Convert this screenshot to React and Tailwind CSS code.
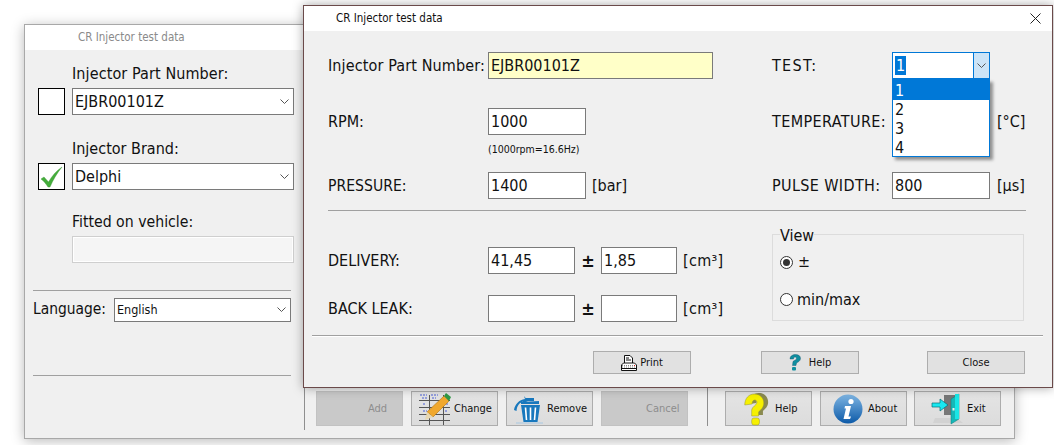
import React from "react";

const FONT = { fontFamily: '"DejaVu Sans Condensed","DejaVu Sans",sans-serif' };

function Chevron({ className = "" }) {
  return (
    <svg width="9" height="6" viewBox="0 0 9 6" className={className} fill="none" stroke="#555" strokeWidth="1">
      <path d="M0.5 0.5 L4.5 4.5 L8.5 0.5" />
    </svg>
  );
}

function Select({ value, w, h = "h-[27px]", text = "text-[16px]" }) {
  return (
    <div className={`${w} ${h} ${text} flex items-center justify-between border border-[#7a7a7a] bg-white pl-[2px] pr-[4px] text-[#111]`}>
      <span className="pt-px">{value}</span>
      <Chevron />
    </div>
  );
}

function Input({ value = "", w = "w-[98px]", bg = "bg-white" }) {
  return (
    <div className={`${w} ${bg} flex h-[27px] shrink-0 items-center border border-[#7a7a7a] pt-px pl-[2px] text-[16px] text-[#111]`}>
      {value}
    </div>
  );
}

function BackWindowButton({ label, icon, disabled, textPl }) {
  return (
    <div
      className={`relative flex h-[35px] w-[87px] items-center border pt-[2px] text-[11px] ${
        disabled
          ? "border-[#c2c2c2] bg-[#c9c9c9] text-[#8d8d8d]"
          : "border-[#adadad] bg-gradient-to-b from-[#e4e4e4] to-[#dcdcdc] text-[#111]"
      }`}
    >
      {icon}
      <span className={textPl}>{label}</span>
    </div>
  );
}

function DialogButton({ children }) {
  return (
    <div className="flex h-[23px] w-[98px] items-center justify-center gap-[3px] border border-[#adadad] bg-[#e1e1e1] text-[11px] text-[#111]">
      {children}
    </div>
  );
}

function PencilIcon() {
  return (
    <svg width="33" height="34" viewBox="0 0 33 34" className="mt-[-2px] ml-[6px] shrink-0">
      <g stroke="#555" strokeWidth="1" fill="none">
        <path d="M1 8.5H32M1 15.5H32M1 22.5H32M1 28.5H32M11.5 3V33M25.5 3V33" />
      </g>
      <path d="M2 3H9M13 3H20M4 6H10M14 6H18M5 12H8M28 12H31M5 19H9M27 19H30" stroke="#4a5fd8" strokeWidth="1" strokeDasharray="2 1" />
      <path d="M26 4 L31 9 L15 25 L9 20 Z" fill="#f0a82e" stroke="#b07310" strokeWidth="0.6" />
      <path d="M9 20 L15 25 L7 28 Z" fill="#e8d7b0" />
      <path d="M26 4 L28 1 L33 5 L31 9 Z" fill="#2f9a45" />
    </svg>
  );
}

function TrashIcon() {
  return (
    <svg width="32" height="32" viewBox="0 0 32 32" className="mt-[-2px] ml-[6px] shrink-0">
      <path d="M8 12H27L24.5 29H10.5Z" fill="#1878bd" />
      <path d="M12.5 14.5L13.5 27M17.5 14.5V27M22.5 14.5L21.5 27" stroke="#fff" strokeWidth="1.6" />
      <path d="M8 9L26 8V11H8Z" fill="#1878bd" />
      <path d="M13 5H21V8H13Z" fill="#1878bd" />
      <path d="M1 17C2 11 6 7 12 6L11 3L15 8L9 11L10 8.5C6 10 4 13 3.5 18Z" fill="#1878bd" />
      <path d="M3 30H30" stroke="#a8c8e2" strokeWidth="1" />
    </svg>
  );
}

function YellowQuestion() {
  return (
    <svg width="26" height="34" viewBox="0 0 30 34" preserveAspectRatio="none" className="mt-[-2px] ml-[17px] shrink-0">
      <path d="M4 12C4 5 9 1 15 1C22 1 26 5 26 10C26 15 22 17 20 19V23H12V17C12 14 18 12 18 9.5C18 8 17 7 15.5 7C13.5 7 12.5 9 12.5 11Z" fill="#8a8a50" transform="translate(3 0)" />
      <path d="M2 13C2 6 7 2 13 2C20 2 24 6 24 11C24 16 20 18 18 20V24H10V18C10 15 16 13 16 10.5C16 9 15 8 13.5 8C11.5 8 10.5 10 10.5 12Z" fill="#f6f000" stroke="#8f8f30" strokeWidth="0.5" />
      <rect x="10" y="26" width="9" height="7" rx="2.5" fill="#f6f000" stroke="#8f8f30" strokeWidth="0.5" />
    </svg>
  );
}

function InfoIcon() {
  return (
    <svg width="30" height="30" viewBox="0 0 30 30" className="mt-[-2px] ml-[12px] shrink-0">
      <defs>
        <linearGradient id="infoG" x1="0" y1="0" x2="0" y2="1">
          <stop offset="0" stopColor="#7db4e2" />
          <stop offset="1" stopColor="#0d5aa8" />
        </linearGradient>
      </defs>
      <circle cx="15" cy="15" r="14.5" fill="url(#infoG)" />
      <circle cx="18" cy="7.5" r="2.6" fill="#fff" />
      <path d="M12 12H18L15.5 22.5H18L17 25H10.5L13 14.5H11.5Z" fill="#fff" />
    </svg>
  );
}

function DoorIcon() {
  return (
    <svg width="34" height="32" viewBox="0 0 34 32" className="mt-[-2px] ml-[16px] shrink-0">
      <path d="M4 25H26L32 30H2Z" fill="#d2d2d2" />
      <rect x="13" y="2" width="12" height="20" fill="#777" />
      <path d="M20 6L28 1V26L20 31Z" fill="#16b8b8" stroke="#0a7f7f" strokeWidth="0.5" />
      <path d="M24 1H28V26H24Z" fill="#19e6e6" />
      <rect x="21.5" y="15" width="2" height="2.5" fill="#eee" />
      <path d="M1 10H9V6L17 12L9 18V14H1Z" fill="#18e8f0" stroke="#0a6f77" strokeWidth="0.7" />
    </svg>
  );
}

function PrinterIcon() {
  return (
    <svg width="16" height="16" viewBox="0 0 16 16" fill="none" stroke="#111" strokeWidth="1">
      <path d="M3.5 8V0.5H9L11.5 3V8" fill="#fff" />
      <path d="M5 3H8M5 5H10" />
      <path d="M0.5 10L2.5 8H13.5L15.5 10V15.5H0.5Z" fill="#fff" />
      <path d="M1 10.5H15M1 12H15" stroke="#888" strokeDasharray="1 1" />
      <path d="M1 13.5H15" stroke="#111" />
      <path d="M13 10.5H14" stroke="#d22" />
    </svg>
  );
}

function TealQuestion() {
  return (
    <svg width="12" height="17" viewBox="0 0 12 17">
      <path d="M1 5C1 2 3.5 0.5 6.5 0.5C9.5 0.5 11.5 2 11.5 4.5C11.5 7 9 8 7.5 9L7 11.5H3.5L4 7.5C5 6.5 7.5 6 7.5 4.5C7.5 3.5 6.8 3 6 3C5 3 4.5 4 4.5 5Z" fill="#0f8f9f" stroke="#0b4f6f" strokeWidth="0.4" />
      <rect x="3" y="13" width="4" height="3.5" rx="1" fill="#0f8f9f" />
    </svg>
  );
}

function DialogRowRight({ label, value, unit, labelClass = "", children }) {
  return (
    <>
      <span className={`w-[120px] shrink-0 pt-px ${labelClass}`}>{label}</span>
      <div className="relative w-[98px] shrink-0">{children || <Input value={value} />}</div>
      {unit && <span className="ml-[7px] pt-px">{unit}</span>}
    </>
  );
}

function TestCombo() {
  return (
    <>
      <div className="flex h-[27px] w-[98px] items-stretch border border-[#0078d7] bg-white text-[16px]">
        <div className="flex flex-1 items-center pl-[2px]">
          <span className="bg-[#0078d7] px-[1px] leading-[19px] text-white">1</span>
        </div>
        <div className="flex w-[16px] items-center justify-center border-l border-[#0078d7] bg-[#cce4f7]">
          <Chevron />
        </div>
      </div>
      <div className="absolute top-[27px] left-0 z-10 h-[78px] w-[98px] border border-[#0078d7] bg-white text-[16px] leading-[19px] text-[#111] shadow-[3px_3px_3px_rgba(0,0,0,0.4)]">
        <div className="h-[20px] bg-[#0078d7] pl-[2px] pt-[1px] text-white">1</div>
        <div className="pl-[2px]">2</div>
        <div className="pl-[2px]">3</div>
        <div className="pl-[2px]">4</div>
      </div>
    </>
  );
}

function Radio({ checked }) {
  return (
    <span className="flex h-[13px] w-[13px] shrink-0 items-center justify-center rounded-full border border-[#333] bg-white">
      {checked && <span className="h-[7px] w-[7px] rounded-full bg-[#333]" />}
    </span>
  );
}

function BackWindow() {
  return (
    <div className="absolute top-[24px] left-[24px] flex h-[415px] w-[991px] flex-col border border-[#a8a8a8] bg-[#f0f0f0] shadow-[0_2px_12px_rgba(0,0,0,0.28)]">
      <div className="flex h-[25px] shrink-0 items-center bg-white pl-[53px] text-[11.5px] text-[#8a8a8a]">CR Injector test data</div>
      <div className="flex min-h-0 flex-1">
        <div className="w-[279px] shrink-0 pl-[8px] text-[16px] text-[#111]">
          <div className="mt-[14px] ml-[39px] h-[20px] leading-[20px] tracking-[0.1px]">Injector Part Number:</div>
          <div className="mt-[4px] ml-[5px] flex gap-[7px]">
            <div className="h-[27px] w-[27px] border border-black bg-white" />
            <Select value="EJBR00101Z" w="w-[222px]" />
          </div>
          <div className="mt-[24px] ml-[39px] h-[20px] leading-[20px]">Injector Brand:</div>
          <div className="mt-[4px] ml-[5px] flex gap-[7px]">
            <div className="flex h-[27px] w-[27px] items-center justify-center border border-black bg-white">
              <svg width="23" height="22" viewBox="0 0 23 22">
                <path d="M1 13L4 11L8.5 16C12 10 16 5 22 1C17 7 13 14 10 21H8C6 18 4 15 1 13Z" fill="#45ad3c" stroke="#37962f" strokeWidth="0.4" />
              </svg>
            </div>
            <Select value="Delphi" w="w-[222px]" />
          </div>
          <div className="mt-[22px] ml-[39px] h-[20px] text-[15.7px] leading-[20px]">Fitted on vehicle:</div>
          <div className="mt-[4px] ml-[39px] h-[27px] w-[222px] border border-[#cfcfcf] bg-[#f5f5f5] shadow-[inset_0_0_0_1px_#fff]" />
          <div className="mt-[27px] h-px w-[258px] bg-[#a0a0a0]" />
          <div className="mt-[7px] flex h-[24px] w-[258px] items-center justify-between">
            <span className="text-[15.4px]">Language:</span>
            <Select value="English" w="w-[177px]" h="h-[24px]" text="text-[12.5px]" />
          </div>
          <div className="mt-[53px] h-px w-[258px] bg-[#a0a0a0]" />
        </div>
        <div className="flex min-w-0 flex-1 items-end pb-[8px]">
          <div className="flex h-[50px] w-full items-end border-l border-[#8f8f8f] pb-[4px] pl-[11px]">
            <div className="flex gap-[8px]">
              <BackWindowButton disabled label="Add" textPl="pl-[51px]" />
              <BackWindowButton label="Change" icon={<PencilIcon />} textPl="pl-[3px]" />
              <BackWindowButton label="Remove" icon={<TrashIcon />} textPl="pl-[2px]" />
              <BackWindowButton disabled label="Cancel" textPl="pl-[44px]" />
            </div>
            <div className="ml-[19px] h-[39px] w-px shrink-0 bg-[#8f8f8f]" />
            <div className="ml-[17px] flex gap-[7px]">
              <div className="mr-px">
                <BackWindowButton label="Help" icon={<YellowQuestion />} textPl="pl-[6px]" />
              </div>
              <BackWindowButton label="About" icon={<InfoIcon />} textPl="pl-[5px]" />
              <BackWindowButton label="Exit" icon={<DoorIcon />} textPl="pl-[2px]" />
            </div>
          </div>
        </div>
      </div>
    </div>
  );
}

function Dialog() {
  return (
    <div className="absolute top-[5px] left-[303px] z-10 flex h-[383px] w-[750px] flex-col border border-[#6b4a4a] bg-[#f0f0f0] text-[16px] text-[#111] shadow-[0_0_10px_rgba(0,0,0,0.35)]">
      <div className="flex h-[25px] shrink-0 items-center justify-between bg-white pr-[11px] pl-[32px] text-[11.5px] text-[#111]">
        <span className="pt-px">CR Injector test data</span>
        <svg width="11" height="11" viewBox="0 0 11 11" stroke="#222" strokeWidth="1">
          <path d="M0.5 0.5L10.5 10.5M10.5 0.5L0.5 10.5" />
        </svg>
      </div>

      <div className="pt-[21px] pl-[24px]">
        <div className="flex h-[27px] items-center">
          <span className="w-[160px] shrink-0 pt-px tracking-[0.12px]">Injector Part Number:</span>
          <div className="w-[284px] shrink-0">
            <Input value="EJBR00101Z" w="w-[225px]" bg="bg-[#ffffc8]" />
          </div>
          <DialogRowRight label="TEST:" labelClass="tracking-[1.3px]">
            <TestCombo />
          </DialogRowRight>
        </div>
        <div className="mt-[29px] flex h-[27px] items-center">
          <span className="w-[160px] shrink-0 pt-px">RPM:</span>
          <div className="w-[284px] shrink-0">
            <Input value="1000" />
          </div>
          <DialogRowRight label="TEMPERATURE:" labelClass="tracking-[0.4px]" value="" unit="[°C]" />
        </div>
        <div className="h-[37px] pt-[7px] pl-[160px] text-[10.5px] leading-[14px]">(1000rpm=16.6Hz)</div>
        <div className="flex h-[27px] items-center">
          <span className="w-[160px] shrink-0 pt-[2px] text-[15.6px]">PRESSURE:</span>
          <div className="flex w-[284px] shrink-0 items-center gap-[6px]">
            <Input value="1400" />
            <span className="pt-px">[bar]</span>
          </div>
          <DialogRowRight label="PULSE WIDTH:" labelClass="tracking-[0.37px]" value="800" unit="[µs]" />
        </div>
        <div className="mt-[11px] h-px w-[698px] bg-[#a0a0a0]" />
      </div>

      <div className="flex pl-[24px]">
        <div className="w-[444px] shrink-0 pt-[36px]">
          <div className="flex h-[27px] items-center">
            <span className="w-[160px] shrink-0 pt-px">DELIVERY:</span>
            <Input value="41,45" w="w-[87px]" />
            <span className="w-[26px] text-center text-[18px] font-bold">±</span>
            <Input value="1,85" w="w-[76px]" />
            <span className="ml-[6px] pt-px tracking-[0.3px]">[cm³]</span>
          </div>
          <div className="mt-[21px] flex h-[27px] items-center">
            <span className="w-[160px] shrink-0 pt-px">BACK LEAK:</span>
            <Input w="w-[87px]" />
            <span className="w-[26px] text-center text-[18px] font-bold">±</span>
            <Input w="w-[76px]" />
            <span className="ml-[6px] pt-px tracking-[0.3px]">[cm³]</span>
          </div>
        </div>
        <fieldset className="mt-[13px] h-[97px] w-[252px] border border-[#dcdcdc] pl-[7px]">
          <legend className="leading-[20px]">
            <span className="relative top-[2px]">View</span>
          </legend>
          <div className="mt-[8px] flex h-[20px] items-center gap-[5px]">
            <Radio checked />
            <span>±</span>
          </div>
          <div className="mt-[17px] flex h-[20px] items-center gap-[4px]">
            <Radio />
            <span className="pt-px">min/max</span>
          </div>
        </fieldset>
      </div>

      <div className="mt-[13px] mr-[9px] ml-[8px] h-[2px] border-t border-b border-t-[#a0a0a0] border-b-white" />

      <div className="mt-[14px] flex pl-[289px]">
        <DialogButton>
          <PrinterIcon />
          <span className="pt-[2px]">Print</span>
        </DialogButton>
        <div className="ml-[70px]">
          <DialogButton>
            <TealQuestion />
            <span className="ml-[5px] pt-[2px]">Help</span>
          </DialogButton>
        </div>
        <div className="ml-[68px]">
          <DialogButton>
            <span className="pt-[2px]">Close</span>
          </DialogButton>
        </div>
      </div>
    </div>
  );
}

export default function App() {
  return (
    <div className="relative h-[445px] w-[1054px] overflow-hidden bg-white" style={FONT}>
      <BackWindow />
      <Dialog />
    </div>
  );
}
